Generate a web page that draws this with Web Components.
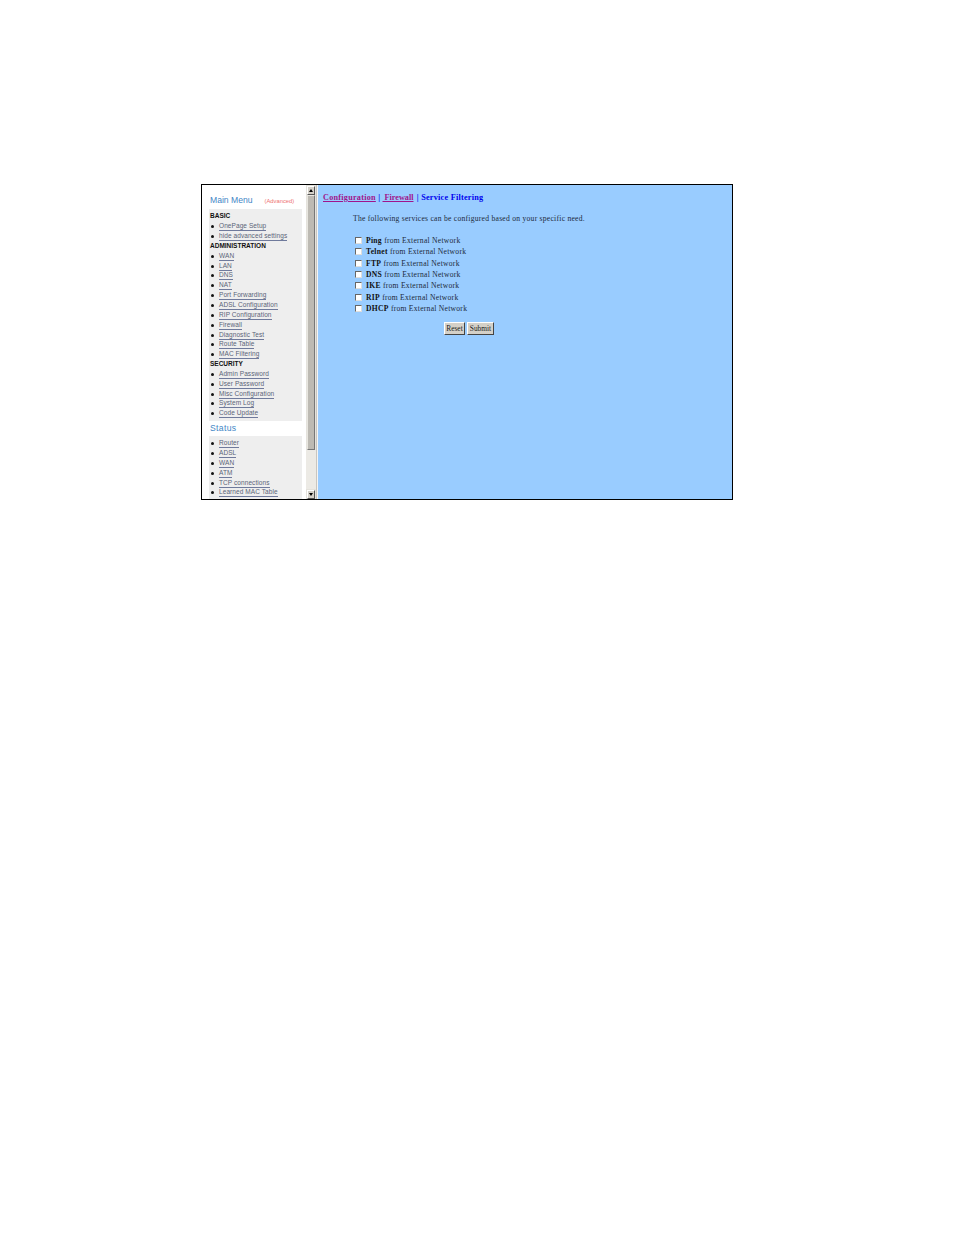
<!DOCTYPE html>
<html>
<head>
<meta charset="utf-8">
<title>Service Filtering</title>
<style>
  html, body { margin: 0; background: #fff; }
  body { padding: 184px 0 0 201px; height: 1051px; box-sizing: border-box; overflow: hidden; }
</style>
</head>
<body>
<router-frame>
  <side-menu slot="menu">
    <menu-title label="Main Menu" note="(Advanced)"></menu-title>
    <menu-box>
      <menu-head>BASIC</menu-head>
      <menu-link>OnePage Setup</menu-link>
      <menu-link>hide advanced settings</menu-link>
      <menu-head>ADMINISTRATION</menu-head>
      <menu-link>WAN</menu-link>
      <menu-link>LAN</menu-link>
      <menu-link>DNS</menu-link>
      <menu-link>NAT</menu-link>
      <menu-link>Port Forwarding</menu-link>
      <menu-link>ADSL Configuration</menu-link>
      <menu-link>RIP Configuration</menu-link>
      <menu-link>Firewall</menu-link>
      <menu-link>Diagnostic Test</menu-link>
      <menu-link>Route Table</menu-link>
      <menu-link>MAC Filtering</menu-link>
      <menu-head>SECURITY</menu-head>
      <menu-link>Admin Password</menu-link>
      <menu-link>User Password</menu-link>
      <menu-link>Misc Configuration</menu-link>
      <menu-link>System Log</menu-link>
      <menu-link>Code Update</menu-link>
    </menu-box>
    <menu-title label="Status"></menu-title>
    <menu-box>
      <menu-link>Router</menu-link>
      <menu-link>ADSL</menu-link>
      <menu-link>WAN</menu-link>
      <menu-link>ATM</menu-link>
      <menu-link>TCP connections</menu-link>
      <menu-link>Learned MAC Table</menu-link>
    </menu-box>
  </side-menu>
  <service-form slot="main">
    <service-row name="Ping"></service-row>
    <service-row name="Telnet"></service-row>
    <service-row name="FTP"></service-row>
    <service-row name="DNS"></service-row>
    <service-row name="IKE"></service-row>
    <service-row name="RIP"></service-row>
    <service-row name="DHCP"></service-row>
  </service-form>
</router-frame>

<script>
//Outer frame with the two panes
//
class RouterFrame extends HTMLElement {
  constructor() {
    super();
    this.attachShadow({mode: 'open'}).innerHTML = `
      <style>
        :host { display: grid; grid-template-columns: 104px 10px 2px 1fr; width: 530px; height: 314px; border: 1px solid #000; background: #fff; overflow: hidden; }
        .menu { overflow: hidden; min-width: 0; height: 314px; }
        .bar { display: flex; flex-direction: column; background: #e4e2dc; height: 314px; }
        .btn { height: 9px; margin: 1px 1px 0; box-sizing: border-box; background: #d4d0c8; border: 1px solid; border-color: #fff #555 #555 #fff; display: flex; align-items: center; justify-content: center; }
        .btn i { width: 0; height: 0; border: 2.5px solid transparent; }
        .up i { border-bottom: 3px solid #000; border-top: 0; }
        .down i { border-top: 3px solid #000; border-bottom: 0; }
        .thumb { height: 255px; margin: 0 1px; box-sizing: border-box; background: #bdbab3; border: 1px solid; border-color: #e8e6e0 #777 #777 #e8e6e0; }
        .track { flex: 1; background: #eceae5; }
        .split { background: #c9c6bf; border-right: 1px solid #f4f4f4; box-sizing: border-box; }
        .main { background: #99ccff; min-width: 0; }
      </style>
      <div class="menu"><slot name="menu"></slot></div>
      <div class="bar">
        <div class="btn up"><i></i></div>
        <div class="thumb"></div>
        <div class="track"></div>
        <div class="btn down"><i></i></div>
      </div>
      <div class="split"></div>
      <div class="main"><slot name="main"></slot></div>
    `;
  }
}
customElements.define('router-frame', RouterFrame);

//Left pane
//
class SideMenu extends HTMLElement {
  constructor() {
    super();
    this.attachShadow({mode: 'open'}).innerHTML = `
      <style>
        :host { display: block; padding: 8px 4px 0 7px; font-family: "Liberation Sans", Arial, sans-serif; }
      </style>
      <slot></slot>
    `;
  }
}
customElements.define('side-menu', SideMenu);

class MenuTitle extends HTMLElement {
  constructor() {
    super();
    this.attachShadow({mode: 'open'}).innerHTML = `
      <style>
        :host { display: flex; align-items: baseline; height: 16px; padding-left: 1px; }
        :host([label="Status"]) { height: 15px; }
        :host([label="Status"]) b { letter-spacing: .35px; }
        b { font-weight: 400; font-size: 8.6px; line-height: 15px; color: #3f86c6; }
        span { margin-left: 12px; font-size: 5.8px; color: #ee6f6f; }
      </style>
      <b></b><span></span>
    `;
  }

  connectedCallback() {
    this.shadowRoot.querySelector('b').textContent = this.getAttribute('label');
    this.shadowRoot.querySelector('span').textContent = this.getAttribute('note') || '';
  }
}
customElements.define('menu-title', MenuTitle);

class MenuBox extends HTMLElement {
  constructor() {
    super();
    this.attachShadow({mode: 'open'}).innerHTML = `
      <style>
        :host { display: block; background: #eeeeee; padding: 3px 0 2px 1px; }
      </style>
      <slot></slot>
    `;
  }
}
customElements.define('menu-box', MenuBox);

class MenuHead extends HTMLElement {
  constructor() {
    super();
    this.attachShadow({mode: 'open'}).innerHTML = `
      <style>
        :host { display: block; height: 9.85px; line-height: 8.85px; font-size: 6.5px; font-weight: 700; color: #111; white-space: nowrap; }
      </style>
      <slot></slot>
    `;
  }
}
customElements.define('menu-head', MenuHead);

class MenuLink extends HTMLElement {
  constructor() {
    super();
    this.attachShadow({mode: 'open'}).innerHTML = `
      <style>
        :host { display: flex; align-items: center; height: 9.85px; white-space: nowrap; }
        i { width: 3px; height: 3px; border-radius: 50%; background: #111; margin: 0 5px 0 1px; flex: none; }
        a { font-size: 6.5px; line-height: 8px; color: #5a6478; text-decoration: none; border-bottom: 1px solid #6f7a9c; letter-spacing: .08px; }
      </style>
      <i></i><a><slot></slot></a>
    `;
  }
}
customElements.define('menu-link', MenuLink);

//Right pane
//
class ServiceForm extends HTMLElement {
  constructor() {
    super();
    this.attachShadow({mode: 'open'}).innerHTML = `
      <style>
        :host { display: block; padding: 8px 0 0 5px; font-family: "Liberation Serif", "Times New Roman", serif; font-size: 7.6px; color: #1c2a3a; }
        .crumbs { font-size: 8.2px; font-weight: 700; line-height: 10px; color: #0000ee; letter-spacing: .25px; white-space: nowrap; }
        .crumbs a { color: #a0148c; text-decoration: underline; }
        .crumbs .fw { letter-spacing: 0; margin-right: 1px; }
        p { margin: 11px 0 11px 30px; line-height: 10px; letter-spacing: .26px; white-space: nowrap; }
        .rows { display: flex; flex-direction: column; margin-left: 32px; }
        .btns { display: flex; gap: 2px; margin: 8px 0 0 121px; }
        button { height: 13px; padding: 0; box-sizing: border-box; font: 7.4px "Liberation Serif", serif; color: #222; background: #d4d0c8; border: 1px solid; border-color: #fff #444 #444 #fff; }
        .r { width: 21px; }
        .s { width: 27px; }
      </style>
      <div class="crumbs"><a>Configuration</a> | <a class="fw">&nbsp;Firewall</a> | Service Filtering</div>
      <p>The following services can be configured based on your specific need.</p>
      <div class="rows"><slot></slot></div>
      <div class="btns"><button class="r">Reset</button><button class="s">Submit</button></div>
    `;
  }
}
customElements.define('service-form', ServiceForm);

class ServiceRow extends HTMLElement {
  constructor() {
    super();
    this.attachShadow({mode: 'open'}).innerHTML = `
      <style>
        :host { display: flex; align-items: center; height: 11.33px; white-space: nowrap; letter-spacing: .26px; }
        i { width: 7px; height: 7px; box-sizing: border-box; background: #fff; border: 1px solid; border-color: #666 #ddd #ddd #666; margin-right: 4px; flex: none; }
        b { letter-spacing: .3px; color: #111; }
      </style>
      <i></i><span><b></b> from External Network</span>
    `;
  }

  connectedCallback() {
    this.shadowRoot.querySelector('b').textContent = this.getAttribute('name');
  }
}
customElements.define('service-row', ServiceRow);
</script>
</body>
</html>
